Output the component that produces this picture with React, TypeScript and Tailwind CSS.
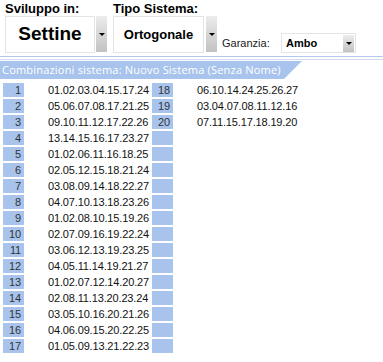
import type { ReactNode } from 'react';

const combos = [
  '01.02.03.04.15.17.24',
  '05.06.07.08.17.21.25',
  '09.10.11.12.17.22.26',
  '13.14.15.16.17.23.27',
  '01.02.06.11.16.18.25',
  '02.05.12.15.18.21.24',
  '03.08.09.14.18.22.27',
  '04.07.10.13.18.23.26',
  '01.02.08.10.15.19.26',
  '02.07.09.16.19.22.24',
  '03.06.12.13.19.23.25',
  '04.05.11.14.19.21.27',
  '01.02.07.12.14.20.27',
  '02.08.11.13.20.23.24',
  '03.05.10.16.20.21.26',
  '04.06.09.15.20.22.25',
  '01.05.09.13.21.22.23',
  '06.10.14.24.25.26.27',
  '03.04.07.08.11.12.16',
  '07.11.15.17.18.19.20',
];

const ROWS = 17;

const Arrow = ({ className }: { className: string }) => (
  <div
    className={`flex items-center justify-center bg-linear-to-b from-[#ececec] to-[#c2c2c2] ${className}`}
  >
    <div className="h-0 w-0 border-x-[3px] border-t-[3px] border-x-transparent border-t-black" />
  </div>
);

const Field = ({ label, children }: { label: string; children: ReactNode }) => (
  <div className="flex flex-col">
    <div className="h-[15px] text-[13px] leading-[15px] font-bold text-black">{label}</div>
    {children}
  </div>
);

const Cell = ({ n }: { n?: number }) => (
  <div className="h-[14px] w-[21px] bg-[#a8c4ed] pr-[3px] text-right text-[11px] leading-[14px] text-[#333]">
    {n ?? ''}
  </div>
);

const App = () => (
  <main className="relative h-[362px] w-[383px] overflow-hidden bg-white font-['Liberation_Sans',Arial,sans-serif]">
    <header className="flex pt-px pl-[5px]">
      <Field label="Sviluppo in:">
        <div className="flex gap-px">
          <div className="flex h-[37px] w-[90px] items-center justify-center border border-[#e4e4e4] text-[19px] font-bold text-black">
            Settine
          </div>
          <Arrow className="h-[36px] w-[11px]" />
        </div>
      </Field>

      <div className="ml-[6px]">
        <Field label="Tipo Sistema:">
          <div className="flex gap-[2px]">
            <div className="flex h-[37px] w-[91px] items-center justify-center border border-[#e4e4e4] text-[13px] font-bold text-black">
              Ortogonale
            </div>
            <Arrow className="h-[36px] w-[11px]" />
          </div>
        </Field>
      </div>

      <div className="mt-[32px] ml-[5px] flex h-[20px] items-center">
        <span className="w-[59px] text-[11px] text-[#222]">Garanzia:</span>
        <div className="flex h-[20px] w-[75px] items-center justify-between border border-[#e4e4e4] pr-px pl-[4px]">
          <span className="text-[11px] font-bold text-black">Ambo</span>
          <Arrow className="h-[17px] w-[11px]" />
        </div>
      </div>
    </header>

    <div className="mt-[3px] h-px bg-[#b3c9ea]" />
    <div className="mt-[2px] h-px bg-[#d0ddf1]" />
    <div className="mt-px h-[18px] w-[302px] bg-[#a8c4ed] pl-[2px] font-['Open_Sans',sans-serif] text-[11px] leading-[18px] tracking-[0.2px] text-white [clip-path:polygon(0_0,100%_0,calc(100%-18px)_100%,0_100%)]">
      Combinazioni sistema: Nuovo Sistema (Senza Nome)
    </div>

    <section className="mt-[4px] flex flex-col gap-[2px] pl-[3px]">
      {Array.from({ length: ROWS }, (_, i) => {
        const second = i + ROWS;
        return (
          <div key={i} className="flex h-[14px] text-[11px] leading-[14px] tracking-[-0.15px] text-[#111]">
            <Cell n={i + 1} />
            <span className="ml-[24px] w-[104px]">{combos[i]}</span>
            <Cell n={second < combos.length ? second + 1 : undefined} />
            <span className="ml-[24px]">{combos[second] ?? ''}</span>
          </div>
        );
      })}
    </section>
  </main>
);

export default App;
